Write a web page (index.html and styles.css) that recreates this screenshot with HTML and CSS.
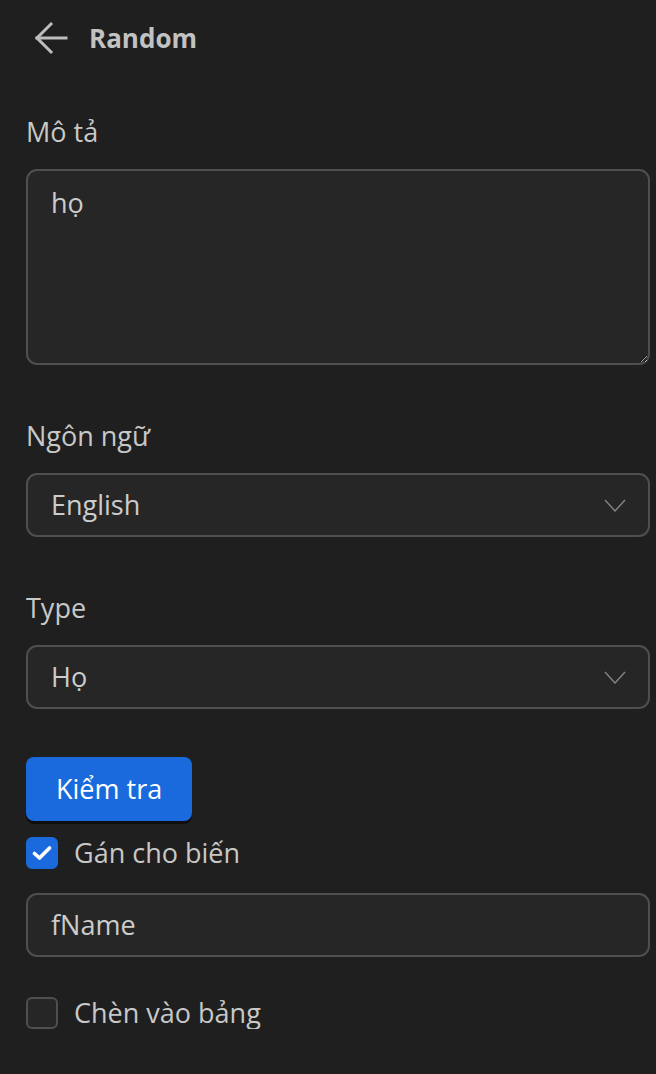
FILE: index.html
```html
<!DOCTYPE html>
<html lang="vi">
<head>
<meta charset="utf-8">
<title>Random</title>
<link rel="stylesheet" href="styles.css">
</head>
<body>
<div class="page">
  <header class="header">
    <button class="back" aria-label="Back">
      <svg width="34" height="34" viewBox="0 0 34 34" fill="none" stroke="#bdbdbd" stroke-width="3" stroke-linecap="square">
        <path d="M3 17 H32"/>
        <path d="M17 3 L3 17 L17 31"/>
      </svg>
    </button>
    <h1 class="title">Random</h1>
  </header>

  <div class="field first">
    <label class="label">Mô tả</label>
    <textarea class="textarea">họ</textarea>
  </div>

  <div class="field">
    <label class="label">Ngôn ngữ</label>
    <div class="select">
      <span class="select-value">English</span>
      <svg class="chevron" width="22" height="13" viewBox="0 0 22 13" fill="none" stroke="#858585" stroke-width="1.4"><path d="M1 1 L11 12 L21 1"/></svg>
    </div>
  </div>

  <div class="field">
    <label class="label">Type</label>
    <div class="select">
      <span class="select-value">Họ</span>
      <svg class="chevron" width="22" height="13" viewBox="0 0 22 13" fill="none" stroke="#858585" stroke-width="1.4"><path d="M1 1 L11 12 L21 1"/></svg>
    </div>
  </div>

  <button class="btn-primary">Kiểm tra</button>

  <div class="check-row assign">
    <span class="checkbox checked">
      <svg width="20" height="16" viewBox="0 0 20 16" fill="none" stroke="#ffffff" stroke-width="3.6" stroke-linecap="round" stroke-linejoin="round"><path d="M2.5 8.5 L7.5 13 L17.5 3"/></svg>
    </span>
    <span class="check-label">Gán cho biến</span>
  </div>

  <div class="input">fName</div>

  <div class="check-row insert">
    <span class="checkbox"></span>
    <span class="check-label">Chèn vào bảng</span>
  </div>
</div>
</body>
</html>
```

FILE: styles.css
```css
* { box-sizing: border-box; }
html, body {
  margin: 0;
  padding: 0;
  background: #1f1f1f;
  color-scheme: dark;
}
body {
  font-family: "Open Sans", "Noto Sans", sans-serif;
  font-size: 27px;
  line-height: 32px;
  color: #cccccc;
}
.page {
  padding: 0 6px 0 26px;
  display: flex;
  flex-direction: column;
}
.header {
  height: 76px;
  display: flex;
  align-items: center;
  gap: 21px;
  padding-left: 7px;
}
.back {
  background: none;
  border: 0;
  padding: 0;
  width: 35px;
  height: 36px;
  display: flex;
  align-items: center;
  justify-content: center;
  cursor: pointer;
}
.title {
  margin: 0;
  font-size: 26px;
  font-weight: 700;
  color: #c2c2c2;
}
.field {
  display: flex;
  flex-direction: column;
  gap: 21px;
  margin-top: 55px;
}
.field.first { margin-top: 40px; }
.label {
  color: #c8c8c8;
}
.textarea {
  height: 196px;
  background: #262626;
  border: 2px solid #4f4f4f;
  border-radius: 11px;
  color: #cccccc;
  font: inherit;
  padding: 16px 23px;
  resize: vertical;
  outline: none;
}
.select, .input {
  height: 64px;
  background: #262626;
  border: 2px solid #4f4f4f;
  border-radius: 11px;
  display: flex;
  align-items: center;
  justify-content: space-between;
  padding: 0 22px 0 23px;
  color: #cccccc;
}
.btn-primary {
  align-self: flex-start;
  margin-top: 48px;
  height: 64px;
  padding: 0 30px;
  border: 0;
  border-radius: 8px;
  background: #1a6ade;
  color: #ffffff;
  font: inherit;
  box-shadow: 0 3px 0 rgba(0, 0, 0, 0.55);
}
.check-row {
  display: flex;
  align-items: center;
  gap: 16px;
}
.check-row.assign { margin-top: 16px; }
.check-row.insert { margin-top: 40px; }
.checkbox {
  width: 32px;
  height: 32px;
  border-radius: 6px;
  border: 2px solid #4f4f4f;
  background: #262626;
  display: flex;
  align-items: center;
  justify-content: center;
}
.checkbox.checked {
  background: #1a6ade;
  border-color: #1a6ade;
}
.check-label { color: #c8c8c8; }
.input { margin-top: 24px; }
```
